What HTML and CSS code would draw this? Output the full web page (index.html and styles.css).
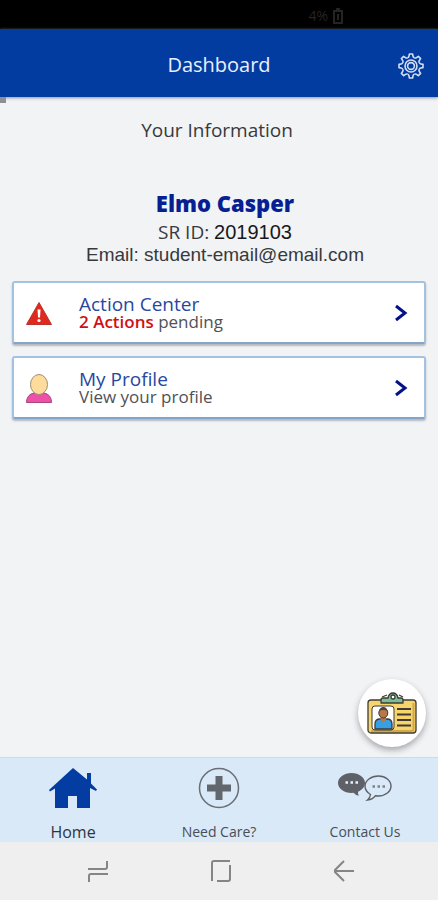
FILE: index.html
```
<!DOCTYPE html>
<html lang="en">
<head>
<meta charset="utf-8">
<meta name="viewport" content="width=device-width, initial-scale=1">
<title>Dashboard</title>
<link rel="stylesheet" href="styles.css">
</head>
<body>
<div class="status">
  <span>4%</span>
  <svg width="12" height="16" viewBox="0 0 12 16" fill="none" stroke="currentColor" stroke-width="2"><path d="M2 3h8v12H2zM4 1h4M6 6v6"/></svg>
</div>
<header class="header">
  <h1>Dashboard</h1>
  <button class="settings" type="button" aria-label="Settings">
    <svg width="26" height="26" viewBox="-13 -13 26 26" fill="none" stroke="currentColor" stroke-width="1.6" stroke-linejoin="round">
      <defs><path id="tooth" d="M-3.4-8.2Q-2.2-8.6-2-9.8L-1.6-12H1.6L2-9.8Q2.2-8.6 3.4-8.2"/></defs>
      <use href="#tooth"/><use href="#tooth" transform="rotate(45)"/><use href="#tooth" transform="rotate(90)"/><use href="#tooth" transform="rotate(135)"/>
      <use href="#tooth" transform="rotate(180)"/><use href="#tooth" transform="rotate(225)"/><use href="#tooth" transform="rotate(270)"/><use href="#tooth" transform="rotate(315)"/>
      <circle r="6"/><circle r="3.4"/>
    </svg>
  </button>
</header>
<div class="progress"></div>
<main class="main">
  <h2>Your Information</h2>
  <section class="person">
    <p class="name">Elmo Casper</p>
    <p class="sr">SR ID: <span class="value">2019103</span></p>
    <p class="email">Email: student-email@email.com</p>
  </section>
  <a class="card" href="#actions">
    <svg width="28" height="28" viewBox="0 0 28 28"><path d="M14 3.500 26.500 25.500H1.500z" fill="#e0281f" stroke="#b8352c" stroke-linejoin="round"/><path d="M12.500 10.500h3l-.5 8h-2z" fill="#fff"/><circle cx="14" cy="21.500" r="1.600" fill="#fff"/></svg>
    <span class="text"><span class="title">Action Center</span><span class="sub"><strong>2 Actions</strong> pending</span></span>
    <svg class="chevron" width="14" height="18" viewBox="0 0 14 18"><path d="M2 2l9 7-9 7"/></svg>
  </a>
  <a class="card" href="#profile">
    <svg width="28" height="32" viewBox="0 0 28 32" stroke-width="1"><path d="M1.500 30.500q0-6 4.500-8.500 3-1.500 8-1.500t8 1.500q4.500 2.500 4.500 8.500z" fill="#ee4fa8" stroke="#a5487c"/><ellipse cx="14" cy="12.500" rx="8.500" ry="10" fill="#ffdc9c" stroke="#9c8e70"/></svg>
    <span class="text"><span class="title">My Profile</span><span class="sub">View your profile</span></span>
    <svg class="chevron" width="14" height="18" viewBox="0 0 14 18"><path d="M2 2l9 7-9 7"/></svg>
  </a>
  <button class="badge" type="button" aria-label="Show ID card">
    <svg width="50" height="44" viewBox="0 0 50 44" stroke="#3f3b34" stroke-width="1.300" stroke-linejoin="round">
      <rect x="1" y="9" width="48" height="33" rx="3" fill="#f6d56c"/>
      <path d="M46.500 12v26q0 2-2 2H4" fill="none" stroke="#d5a847" stroke-width="2"/>
      <rect x="5" y="15" width="22" height="24" rx="3" fill="#fff" stroke-width="1"/>
      <path d="M8 38v-5q0-5 5-5h7q5 0 5 5v5z" fill="#37a0e4"/>
      <path d="M13.500 25h5.500v4l-2.700 3-2.800-3z" fill="#b87748" stroke="none"/>
      <ellipse cx="16.300" cy="22" rx="4.500" ry="5" fill="#b87748" stroke-width="1"/>
      <path d="M12 20q1-4 4.300-4t4.400 4q-4-2-8.700 0z" fill="#544137" stroke="none"/>
      <path d="M30 18h14M30 23.500h14M30 29h14M30 34.500h14" fill="none" stroke-width="2"/>
      <path d="M14 12V9q0-2 2-2h5q1-5 5-5t5 5h3q2 0 2 2v3z" fill="#7bbf98"/>
      <circle cx="26" cy="6" r="2" fill="#fff"/>
      <path d="M15 6l5-2M32 4l4 2" fill="none"/>
    </svg>
  </button>
</main>
<nav class="tabs">
  <a class="active" href="#home">
    <svg width="50" height="42" viewBox="0 0 50 42"><path d="M25 1 1 23l1 1.500 5-3V41h13V29h9v12h13V21l6 3 1-1.500-6-6V6h-4v6.500z" fill="#043da2"/></svg>
    <span>Home</span>
  </a>
  <a href="#care">
    <svg width="42" height="42" viewBox="0 0 42 42"><circle cx="21" cy="21" r="19.500" fill="none" stroke="#696d75" stroke-width="1.500"/><path d="M17.500 9h7v8.500H33v7h-8.500V33h-7v-8.500H9v-7h8.500z" fill="#62666d"/></svg>
    <span>Need Care?</span>
  </a>
  <a href="#contact">
    <svg width="56" height="42" viewBox="0 0 56 42">
      <path d="M14.500 6C7 6 1 10.500 1 16s6 10 13.500 10l2-.2q2 2.500 5.500 3-1.300-2-1-4C25.500 22.700 28 19.500 28 16c0-5.500-6-10-13.500-10z" fill="#5e6168"/>
      <path d="M41.500 9C48.500 9 54 13.500 54 19s-5.500 10-12.500 10l-3-.3q-2.500 3.800-8 4.300 2.500-2 3-5.500C30 25.500 28 22.500 28 19c0-5.500 6-10 13.500-10z" fill="none" stroke="#5e6168" stroke-width="1.400"/>
      <path d="M8.500 15.500h2.500m2.500 0h2.500m2.500 0h2.500" stroke="#e8f1fb" stroke-width="2.500"/>
      <path d="M35.500 19.500h2.500m2.500 0h2.500m2.500 0h2.500" stroke="#7d8188" stroke-width="2.500"/>
    </svg>
    <span>Contact Us</span>
  </a>
</nav>
<div class="system">
  <button type="button" aria-label="Recent apps"><svg width="22" height="24" viewBox="0 0 22 24"><path d="M20 2v6q0 2-2 2H1M21 15H4q-2 0-2 2v6"/></svg></button>
  <button type="button" aria-label="Home screen"><svg width="22" height="24" viewBox="0 0 22 24"><path d="M20 2H4Q2 2 2 4v18M20 6v14q0 2-2 2H7"/></svg></button>
  <button type="button" aria-label="Back"><svg width="22" height="24" viewBox="0 0 22 24"><path d="M21 12H2M11 2 2 11v2l9 9"/></svg></button>
</div>
</body>
</html>
```
FILE: styles.css
```
* { box-sizing: border-box; }
body {
  margin: 0;
  min-height: 100vh;
  display: flex;
  flex-direction: column;
  background: #f1f3f5;
  color: #38393d;
  font-family: "Open Sans", "Liberation Sans", sans-serif;
}
h1, h2, p { margin: 0; font-weight: 400; }
svg { display: block; flex: none; }
button { border: 0; padding: 0; background: none; cursor: pointer; }
a { color: inherit; text-decoration: none; }

.status {
  height: 29px;
  padding: 2px 94px 0 0;
  display: flex;
  align-items: center;
  justify-content: flex-end;
  gap: 4px;
  background: #000;
  color: #242424;
  font-size: 14px;
}
.header {
  height: 68px;
  padding: 4px 14px 0;
  display: grid;
  grid-template-columns: 1fr auto 1fr;
  align-items: center;
  background: #033ca0;
  color: #e9efff;
  box-shadow: 0 1px 3px #8d92a6;
}
.header h1 { grid-column: 2; font-size: 20px; line-height: 28px; }
.settings { justify-self: end; padding-top: 2px; color: #d3def5; }
.progress { width: 6px; height: 6px; background: #8f8d96; }

.main {
  flex: 1;
  position: relative;
  padding: 12px 12px 80px;
}
.main h2 { text-align: center; font-size: 19px; line-height: 30px; padding-right: 4px; }
.person { margin: 42px 0 16px; padding-left: 12px; text-align: center; }
.name { color: #061f92; font-size: 22px; font-weight: 800; line-height: 32px; }
.sr { font-size: 19px; line-height: 26px; }
.value { color: #18181b; font-family: "Liberation Sans", sans-serif; font-size: 20px; }
.email { font-family: "Liberation Sans", sans-serif; font-size: 19px; line-height: 20px; }

.card {
  height: 63px;
  margin-bottom: 12px;
  padding: 1px 16px 0 11px;
  display: flex;
  align-items: center;
  border: 2px solid #a5c1e2;
  border-bottom-color: #84a5ca;
  border-radius: 3px;
  background: #fff;
  box-shadow: 0 2px 2px #b4b9bf;
}
.text { flex: 1; padding-left: 26px; }
.title, .sub { display: block; }
.title { color: #2747a0; font-size: 19px; line-height: 18px; }
.sub { color: #505157; font-size: 17px; line-height: 18px; }
.sub strong { color: #cf1015; font-weight: 600; }
.chevron { fill: none; stroke: #04128a; stroke-width: 3; }

.badge {
  position: absolute;
  right: 12px;
  bottom: 10px;
  width: 68px;
  height: 68px;
  display: grid;
  place-items: center;
  border-radius: 50%;
  background: #fff;
  box-shadow: 0 3px 6px #a5a6aa;
}

.tabs {
  height: 85px;
  display: grid;
  grid-template-columns: repeat(3, 1fr);
  background: #d9e9f8;
  border-top: 1px solid #cedbe6;
}
.tabs a {
  padding-top: 9px;
  display: flex;
  flex-direction: column;
  align-items: center;
  gap: 13px;
  color: #484e57;
  font-size: 14px;
  line-height: 20px;
}
.tabs .active { color: #2d353f; font-size: 16px; }

.system {
  height: 58px;
  padding-left: 4px;
  display: flex;
  align-items: center;
  justify-content: center;
  gap: 101px;
  background: #efefef;
}
.system svg { fill: none; stroke: #858588; stroke-width: 2; }
```
